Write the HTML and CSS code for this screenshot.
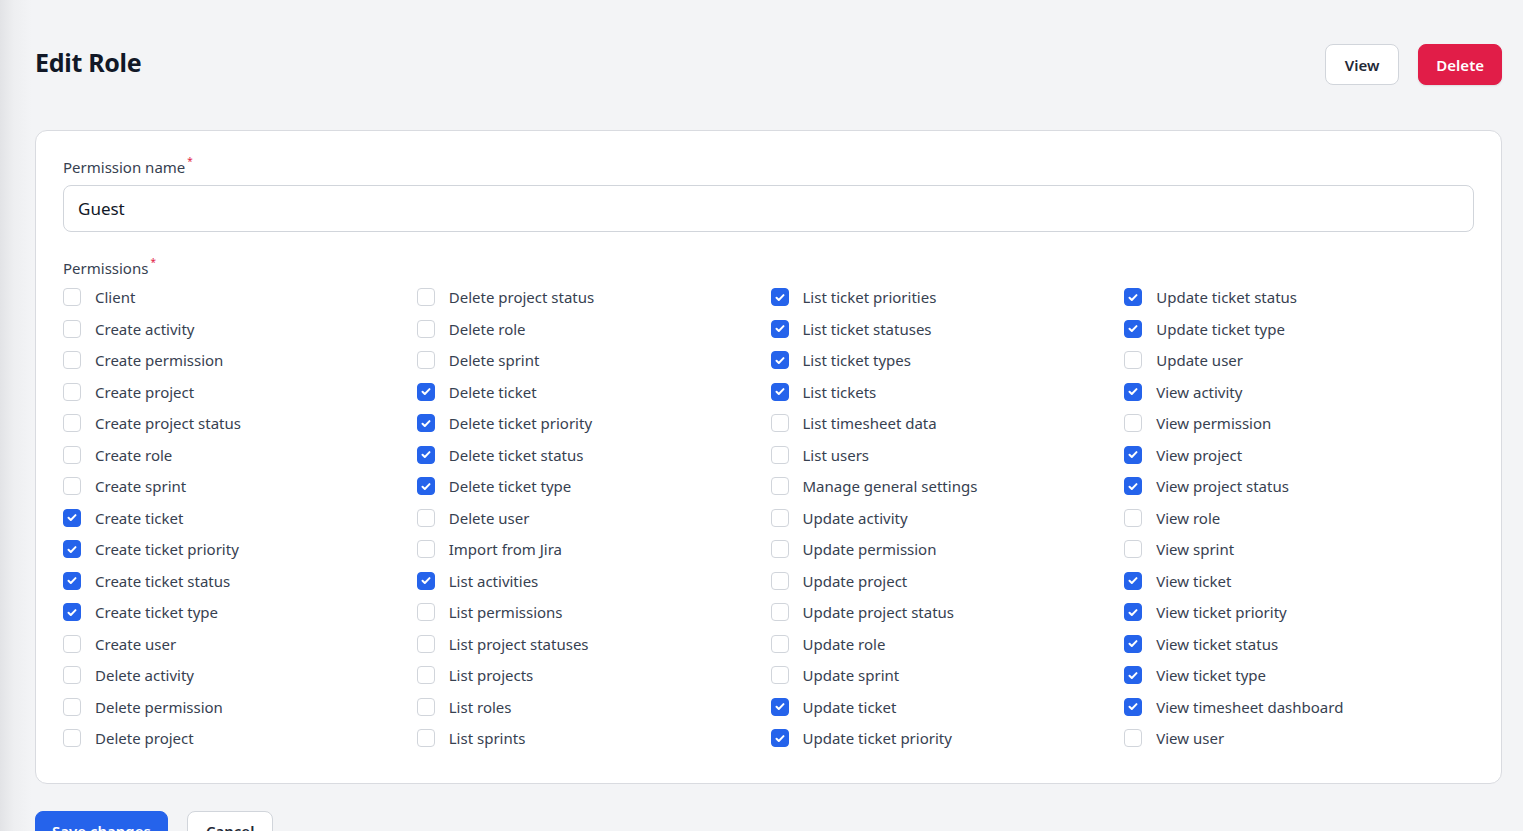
FILE: index.html
```html
<!DOCTYPE html>
<html>
<head>
<meta charset="utf-8">
<link rel="stylesheet" href="styles.css">
</head>
<body>
<div class="page">
  <header class="page-header">
    <h1 class="title">Edit Role</h1>
    <div class="actions">
      <button class="btn btn-outline btn-view">View</button>
      <button class="btn btn-danger">Delete</button>
    </div>
  </header>

  <section class="card">
    <div class="field">
      <label class="label">Permission name<sup class="req">*</sup></label>
      <div class="input">Guest</div>
    </div>
    <div class="field perms-field">
      <label class="label">Permissions<sup class="req">*</sup></label>
      <div class="perm-grid" id="grid"></div>
    </div>
  </section>

  <div class="form-actions">
    <button class="btn btn-primary">Save changes</button>
    <button class="btn btn-outline">Cancel</button>
  </div>
</div>
<script src="app.js"></script>
</body>
</html>
```

FILE: app.js
```js
const items = [
 ["Client",0],["Create activity",0],["Create permission",0],["Create project",0],["Create project status",0],["Create role",0],["Create sprint",0],["Create ticket",1],["Create ticket priority",1],["Create ticket status",1],["Create ticket type",1],["Create user",0],["Delete activity",0],["Delete permission",0],["Delete project",0],
 ["Delete project status",0],["Delete role",0],["Delete sprint",0],["Delete ticket",1],["Delete ticket priority",1],["Delete ticket status",1],["Delete ticket type",1],["Delete user",0],["Import from Jira",0],["List activities",1],["List permissions",0],["List project statuses",0],["List projects",0],["List roles",0],["List sprints",0],
 ["List ticket priorities",1],["List ticket statuses",1],["List ticket types",1],["List tickets",1],["List timesheet data",0],["List users",0],["Manage general settings",0],["Update activity",0],["Update permission",0],["Update project",0],["Update project status",0],["Update role",0],["Update sprint",0],["Update ticket",1],["Update ticket priority",1],
 ["Update ticket status",1],["Update ticket type",1],["Update user",0],["View activity",1],["View permission",0],["View project",1],["View project status",1],["View role",0],["View sprint",0],["View ticket",1],["View ticket priority",1],["View ticket status",1],["View ticket type",1],["View timesheet dashboard",1],["View user",0]
];
const grid = document.getElementById('grid');
const check = '<svg viewBox="0 0 16 16" width="17" height="17"><path d="M4.5 8.3l2.3 2.2 4.7-4.9" fill="none" stroke="#fff" stroke-width="2" stroke-linecap="round" stroke-linejoin="round"/></svg>';
for (const [name, on] of items) {
  const row = document.createElement('label');
  row.className = 'perm';
  row.innerHTML = '<span class="box' + (on ? ' checked' : '') + '">' + (on ? check : '') + '</span><span class="perm-text">' + name + '</span>';
  grid.appendChild(row);
}
```

FILE: styles.css
```css
* { box-sizing: border-box; }
html, body { margin: 0; }
body {
  font-family: "Noto Sans", "Open Sans", sans-serif;
  color: #111827;
  background: linear-gradient(to right, #e2e3e6 0px, #eeeff1 14px, #f3f4f6 32px) #f3f4f6;
  min-height: 831px;
}
.page {
  padding: 44px 21px 0 35px;
}
.page-header {
  display: flex;
  align-items: center;
  justify-content: space-between;
  height: 41px;
}
.title {
  margin: 0 0 5px;
  font-size: 25px;
  line-height: 34px;
  font-weight: 700;
  letter-spacing: -0.3px;
  color: #111827;
}
.actions {
  display: flex;
  gap: 19px;
}
.btn {
  font-family: inherit;
  font-size: 15px;
  font-weight: 600;
  height: 41px;
  padding: 0 18px;
  border-radius: 8px;
  border: 1px solid #d1d5db;
  background: #fff;
  color: #1f2937;
  cursor: pointer;
}
.btn-view { padding: 0 19px; }
.btn-danger {
  background: #e11d48;
  border-color: #e11d48;
  color: #fff;
  padding: 0 17px;
  box-shadow: 0 1px 2px rgba(0,0,0,0.1);
}
.btn-primary {
  background: #2563eb;
  border-color: #2563eb;
  color: #fff;
  padding: 0 16px;
}
.card {
  margin-top: 45px;
  background: #fff;
  border: 1px solid #d9dbe0;
  border-radius: 12px;
  padding: 24px 27px 33px;
}
.label {
  display: block;
  font-size: 15px;
  color: #374151;
  line-height: 24px;
}
.req {
  color: #e11d48;
  font-size: 10px;
  vertical-align: top;
  line-height: 12px;
  margin-left: 2px;
}
.input {
  margin-top: 6px;
  height: 47px;
  border: 1px solid #d1d5db;
  border-radius: 8px;
  padding: 0 14px;
  display: flex;
  align-items: center;
  font-size: 17px;
  color: #111827;
}
.perms-field {
  margin-top: 24px;
}
.perm-grid {
  margin-top: 6px;
  display: grid;
  grid-template-columns: repeat(4, 1fr);
  grid-template-rows: repeat(15, 22.5px);
  grid-auto-flow: column;
  column-gap: 4px;
  row-gap: 9px;
}
.perm {
  display: flex;
  align-items: center;
  gap: 14px;
  font-size: 15px;
  color: #374151;
  line-height: 22px;
}
.box {
  width: 18px;
  height: 18px;
  border: 1px solid #d1d5db;
  border-radius: 4px;
  background: #fff;
  flex: none;
  display: flex;
  align-items: center;
  justify-content: center;
}
.box.checked {
  background: #2563eb;
  border-color: #2563eb;
}
.box svg { display: block; }
.form-actions {
  margin-top: 27px;
  display: flex;
  gap: 19px;
}
```
